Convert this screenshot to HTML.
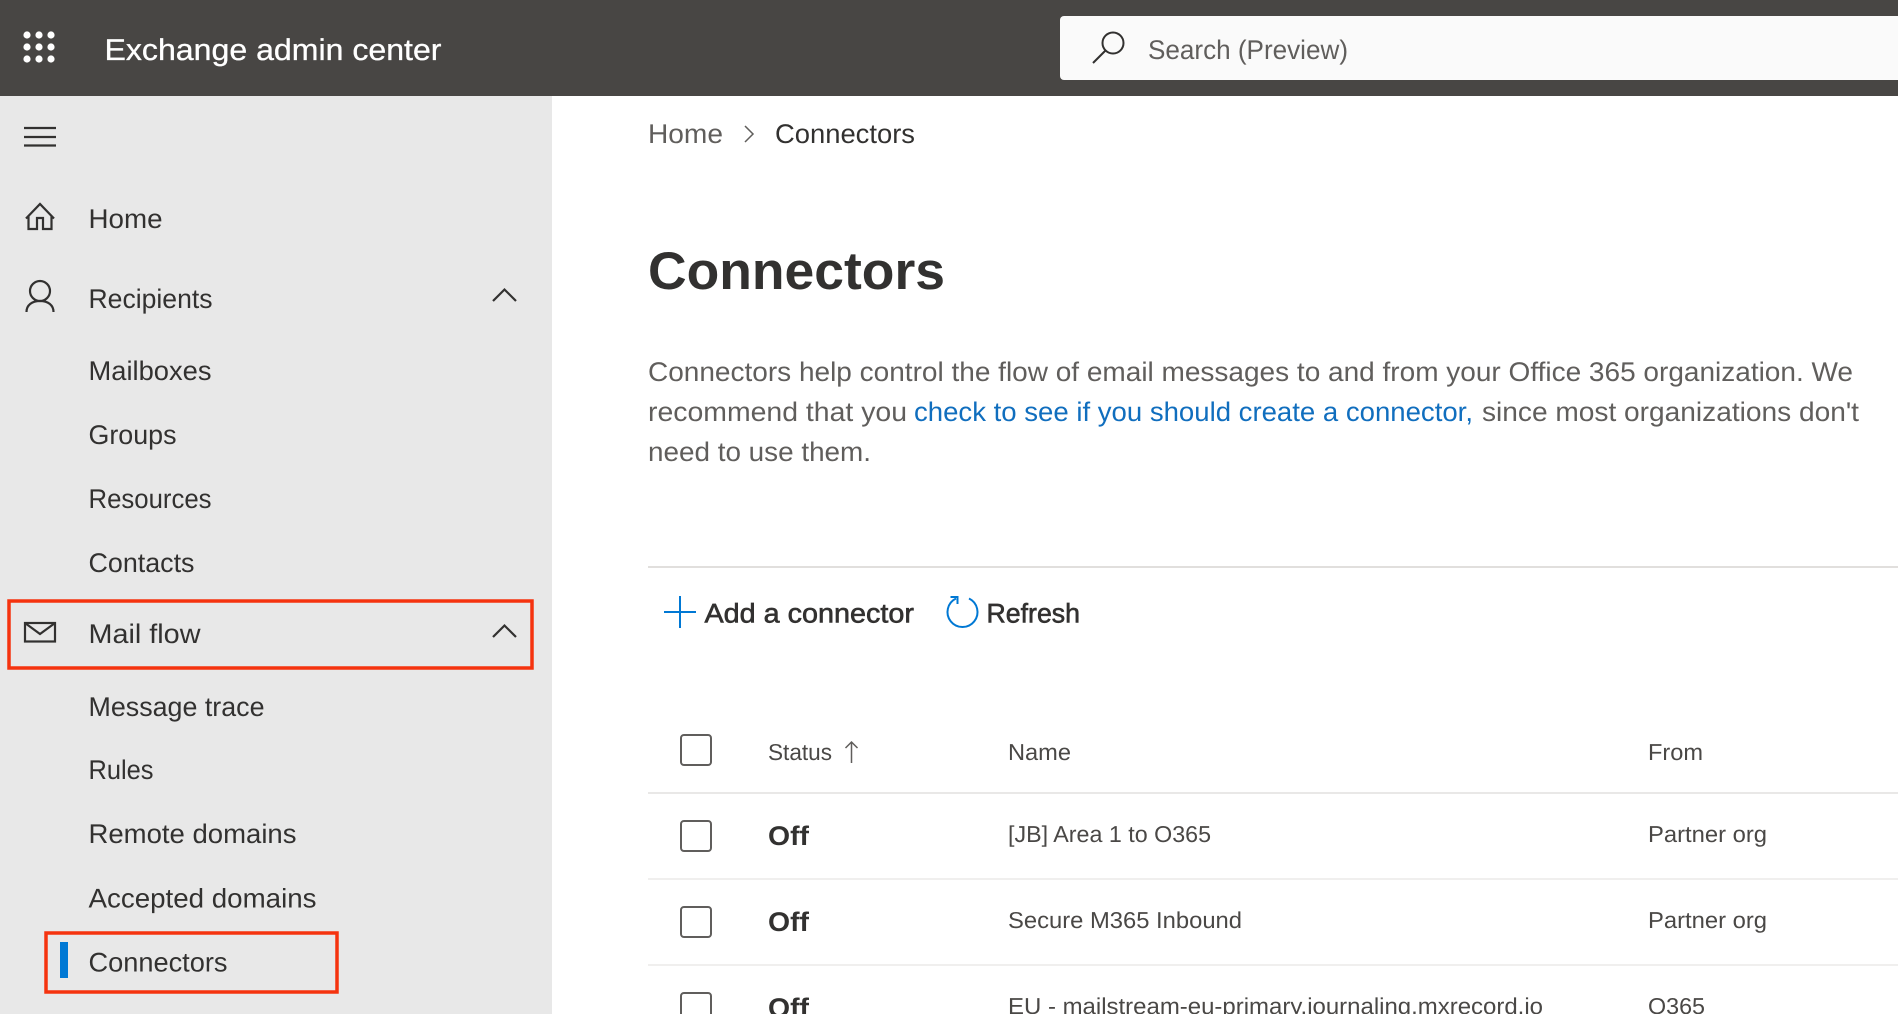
<!DOCTYPE html>
<html lang="en">
<head>
<meta charset="utf-8">
<title>Connectors - Exchange admin center</title>
<style>
html,body{margin:0;padding:0;width:1898px;height:1014px;overflow:hidden;background:#fff}
svg{display:block}
text{font-family:"Liberation Sans",sans-serif;fill:#323130}
.nav{font-size:27px}
.g{fill:#605e5c}
.semi{stroke:#323130;stroke-width:.6px}
.ico{fill:none;stroke:#323130;stroke-width:2.2}
.t{fill:#4a4846}
</style>
</head>
<body>
<svg xmlns="http://www.w3.org/2000/svg" width="1898" height="1014" viewBox="0 0 1898 1014" text-rendering="geometricPrecision">
<rect width="1898" height="1014" fill="#fff"/>
<rect y="96" width="552" height="918" fill="#e8e8e8"/>
<rect width="1898" height="96" fill="#484644"/>

<!-- waffle -->
<g fill="#fff">
<circle cx="27" cy="35" r="3.6"/><circle cx="39" cy="35" r="3.6"/><circle cx="51" cy="35" r="3.6"/>
<circle cx="27" cy="47" r="3.6"/><circle cx="39" cy="47" r="3.6"/><circle cx="51" cy="47" r="3.6"/>
<circle cx="27" cy="59" r="3.6"/><circle cx="39" cy="59" r="3.6"/><circle cx="51" cy="59" r="3.6"/>
</g>
<text x="104.500" y="60" font-size="30" textLength="337" lengthAdjust="spacingAndGlyphs" style="fill:#fff;stroke:#fff;stroke-width:.3px">Exchange admin center</text>

<!-- search -->
<path d="M1898 16H1064a4 4 0 0 0-4 4v56a4 4 0 0 0 4 4h834z" fill="#fafafa"/>
<circle cx="1113" cy="43" r="10.5" fill="none" stroke="#323130" stroke-width="2"/>
<path d="M1105.500 50.500L1093 63" fill="none" stroke="#323130" stroke-width="2"/>
<text x="1148" y="59" font-size="27" textLength="200" lengthAdjust="spacingAndGlyphs" class="g">Search (Preview)</text>

<!-- sidebar -->
<path d="M24 128H56M24 137H56M24 145.500H56" class="ico"/>
<path d="M26 218.500L40 204L54 218.500M28.500 215.500V229H37V218H43V229H51.500V215.500" class="ico"/>
<text x="88.500" y="228" class="nav" textLength="74" lengthAdjust="spacingAndGlyphs">Home</text>

<circle cx="40" cy="291" r="10" class="ico"/>
<path d="M26.500 312C26.500 305 32 301 40 301C48 301 53.500 305 53.500 312" class="ico"/>
<text x="88.500" y="308" class="nav" textLength="124" lengthAdjust="spacingAndGlyphs">Recipients</text>
<path d="M493 301L504.500 289.500L516 301" class="ico"/>

<text x="88.500" y="380" class="nav" textLength="123" lengthAdjust="spacingAndGlyphs">Mailboxes</text>
<text x="88.500" y="444" class="nav" textLength="88" lengthAdjust="spacingAndGlyphs">Groups</text>
<text x="88.500" y="508" class="nav" textLength="123" lengthAdjust="spacingAndGlyphs">Resources</text>
<text x="88.500" y="572" class="nav" textLength="106" lengthAdjust="spacingAndGlyphs">Contacts</text>

<rect x="25" y="623" width="30" height="18.500" class="ico"/>
<path d="M25 623L40 634L55 623" class="ico"/>
<text x="88.500" y="643" class="nav" textLength="112" lengthAdjust="spacingAndGlyphs">Mail flow</text>
<path d="M493 637L504.500 625.500L516 637" class="ico"/>

<text x="88.500" y="716" class="nav" textLength="176" lengthAdjust="spacingAndGlyphs">Message trace</text>
<text x="88.500" y="779" class="nav" textLength="65" lengthAdjust="spacingAndGlyphs">Rules</text>
<text x="88.500" y="843" class="nav" textLength="208" lengthAdjust="spacingAndGlyphs">Remote domains</text>
<text x="88.500" y="907.500" class="nav" textLength="228" lengthAdjust="spacingAndGlyphs">Accepted domains</text>
<text x="88.500" y="971.500" class="nav" textLength="139" lengthAdjust="spacingAndGlyphs">Connectors</text>

<rect x="60" y="942" width="8" height="36" fill="#0078d4"/>
<rect x="9" y="601" width="523" height="67" fill="none" stroke="#f5330f" stroke-width="3.500"/>
<rect x="46" y="933" width="291" height="59" fill="none" stroke="#f5330f" stroke-width="3.500"/>

<!-- main -->
<text x="648" y="143" font-size="27" textLength="75" lengthAdjust="spacingAndGlyphs" class="g">Home</text>
<path d="M745 126L753 134L745 142" fill="none" stroke="#605e5c" stroke-width="1.500"/>
<text x="775" y="143" font-size="27" textLength="140" lengthAdjust="spacingAndGlyphs">Connectors</text>

<text x="648" y="289" font-size="53" font-weight="700" textLength="297" lengthAdjust="spacingAndGlyphs">Connectors</text>

<text x="648" y="381" font-size="27" textLength="1205" lengthAdjust="spacingAndGlyphs" class="g">Connectors help control the flow of email messages to and from your Office 365 organization. We</text>
<text x="648" y="421" font-size="27" textLength="259" lengthAdjust="spacingAndGlyphs" class="g">recommend that you</text>
<text x="914" y="421" font-size="27" textLength="559" lengthAdjust="spacingAndGlyphs" style="fill:#106ebe">check to see if you should create a connector,</text>
<text x="1482" y="421" font-size="27" textLength="377" lengthAdjust="spacingAndGlyphs" class="g">since most organizations don't</text>
<text x="648" y="461" font-size="27" textLength="223" lengthAdjust="spacingAndGlyphs" class="g">need to use them.</text>

<rect x="648" y="566" width="1250" height="2" fill="#e1dfdd"/>

<path d="M664 612H696M680 596V628" fill="none" stroke="#0078d4" stroke-width="2"/>
<text x="704.500" y="622.500" font-size="27" textLength="209.500" lengthAdjust="spacingAndGlyphs" class="semi">Add a connector</text>
<path d="M956 598.500A15 15 0 1 0 969 598.500" fill="none" stroke="#0078d4" stroke-width="2"/>
<path d="M950.500 597H957.500V604" fill="none" stroke="#0078d4" stroke-width="2"/>
<text x="986.500" y="622.500" font-size="27" textLength="93.500" lengthAdjust="spacingAndGlyphs" class="semi">Refresh</text>

<g fill="none" stroke="#605e5c" stroke-width="2">
<rect x="681" y="735" width="30" height="30" rx="3"/>
<rect x="681" y="821" width="30" height="30" rx="3"/>
<rect x="681" y="907" width="30" height="30" rx="3"/>
<rect x="681" y="993" width="30" height="30" rx="3"/>
</g>

<text x="768" y="760" font-size="23" textLength="64" lengthAdjust="spacingAndGlyphs" class="t">Status</text>
<path d="M851.500 763V742M845.500 748L851.500 742L857.500 748" fill="none" stroke="#605e5c" stroke-width="1.500"/>
<text x="1008" y="760" font-size="23" textLength="63" lengthAdjust="spacingAndGlyphs" class="t">Name</text>
<text x="1648" y="760" font-size="23" textLength="55" lengthAdjust="spacingAndGlyphs" class="t">From</text>

<rect x="648" y="792" width="1250" height="2" fill="#e9e8e7"/>
<rect x="648" y="878" width="1250" height="2" fill="#f0efee"/>
<rect x="648" y="964" width="1250" height="2" fill="#f0efee"/>

<text x="768" y="845" font-size="27" font-weight="700" textLength="41" lengthAdjust="spacingAndGlyphs">Off</text>
<text x="1008" y="842" font-size="23" textLength="203" lengthAdjust="spacingAndGlyphs" class="t">[JB] Area 1 to O365</text>
<text x="1648" y="842" font-size="23" textLength="119" lengthAdjust="spacingAndGlyphs" class="t">Partner org</text>

<text x="768" y="931" font-size="27" font-weight="700" textLength="41" lengthAdjust="spacingAndGlyphs">Off</text>
<text x="1008" y="928" font-size="23" textLength="234" lengthAdjust="spacingAndGlyphs" class="t">Secure M365 Inbound</text>
<text x="1648" y="928" font-size="23" textLength="119" lengthAdjust="spacingAndGlyphs" class="t">Partner org</text>

<text x="768" y="1017" font-size="27" font-weight="700" textLength="41" lengthAdjust="spacingAndGlyphs">Off</text>
<text x="1008" y="1014" font-size="23" textLength="535" lengthAdjust="spacingAndGlyphs" class="t">EU - mailstream-eu-primary.journaling.mxrecord.io</text>
<text x="1648" y="1014" font-size="23" textLength="57" lengthAdjust="spacingAndGlyphs" class="t">O365</text>
</svg>
</body>
</html>
